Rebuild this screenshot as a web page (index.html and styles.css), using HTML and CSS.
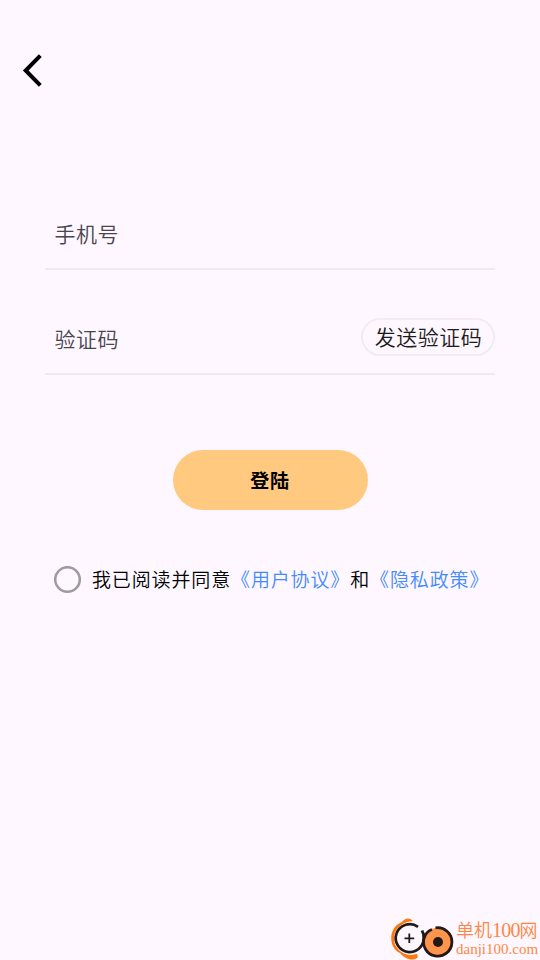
FILE: index.html
```html
<!DOCTYPE html>
<html lang="zh-CN">
<head>
<meta charset="utf-8">
<title>登陆</title>
<link rel="stylesheet" href="styles.css">
</head>
<body>
<main class="page">
  <header class="bar">
    <svg class="back" width="24" height="40" viewBox="0 0 24 40"><path d="M20.3 5.7 5.7 20.5 20.3 35.3" fill="none" stroke="#000" stroke-width="4"/></svg>
  </header>
  <form class="form">
    <div class="field"><span class="label">手机号</span></div>
    <div class="field"><span class="label">验证码</span><button type="button" class="send">发送验证码</button></div>
    <button type="button" class="login">登陆</button>
    <div class="agree">
      <svg class="radio" width="28" height="28" viewBox="0 0 28 28"><circle cx="13.5" cy="13.5" r="12.3" fill="none" stroke="#9e9b9f" stroke-width="2.6"/></svg>
      <p class="terms">我已阅读并同意<a>《用户协议》</a>和<a>《隐私政策》</a></p>
    </div>
  </form>
  <footer class="mark">
    <svg class="logo" width="66" height="44" viewBox="0 0 66 44">
      <path d="M23 5C19 1 15 2 12 6C-2 11-2 32 10 37C15 43 23 46 28 41L27 38L20 39C1 37 0 12 17 6Z" fill="#ff780f"/>
      <circle cx="20" cy="22.5" r="16" fill="#fef7ff"/>
      <path d="M28 10.8A14 14 0 1 0 33.4 19" fill="none" stroke="#231a18" stroke-width="2.7"/>
      <circle cx="48" cy="26" r="14.2" fill="#ff944d"/>
      <path d="M45.5 11.9A14.2 14.2 0 1 1 34.4 21Q36.5 15.5 42 13.5M32 14.5 35 22" fill="none" stroke="#231a18" stroke-width="2.8"/>
      <circle cx="48" cy="26" r="5" fill="#231a18"/>
      <path d="M14.5 22.3H24.2M19.3 17.5V27.1" stroke="#231a18" stroke-width="1.8"/>
    </svg>
    <div class="words">
      <div class="name">单机<span class="digits">100</span>网</div>
      <div class="site">danji100.com</div>
    </div>
  </footer>
</main>
</body>
</html>
```
FILE: styles.css
```css
* { box-sizing: border-box; }
body { margin: 0; background: #fef7ff; font-family: "Noto Sans CJK SC", sans-serif; color: #1d1b20; }
.page { width: 540px; height: 960px; display: flex; flex-direction: column; overflow: hidden; }
.bar { height: 200px; padding: 50px 0 0 19.5px; }
.back, .logo { display: block; flex: none; }
.form { padding: 0 45px; display: flex; flex-direction: column; }
.field { height: 70px; display: flex; justify-content: space-between; align-items: center; border-bottom: 2px solid #eeebef; padding-left: 9.5px; font-size: 21px; letter-spacing: .5px; font-weight: 350; color: #49454f; }
.field + .field { margin-top: 35px; }
.send { width: 134px; height: 38px; margin-top: -4px; padding: 0 0 2px 1px; border: 2px solid #f0edf1; border-radius: 19px; background: none; font: 350 21px/32px "Noto Sans CJK SC", sans-serif; letter-spacing: .5px; color: #1d1b20; text-align: center; }
.label { line-height: 30px; margin-top: -3px; }
.login { width: 195px; height: 60px; margin: 75px auto 0; border: 0; border-radius: 30px; background: #ffc980; font: bold 19px/30px "Noto Sans CJK SC", sans-serif; letter-spacing: .7px; color: #000; }
.agree { display: flex; align-items: center; height: 30px; margin-top: 54px; padding-left: 9px; }
.radio { flex: none; margin-top: 1px; }
.terms { margin: 0 0 0 10px; font-size: 19px; font-weight: 350; letter-spacing: .86px; line-height: 30px; white-space: nowrap; color: #000; }
.terms a { color: #448aff; }
.mark { display: flex; height: 44px; margin-top: auto; padding-left: 390px; }
.words { color: #ff8745; white-space: nowrap; }
.name { font-size: 18px; line-height: 24px; height: 24px; margin-top: 1px; font-weight: 350; }
.digits { display: inline-block; font: 20px/24px "Liberation Serif", serif; letter-spacing: -.8px; }
.site { font: 15px/17px "Liberation Serif", serif; }
```
